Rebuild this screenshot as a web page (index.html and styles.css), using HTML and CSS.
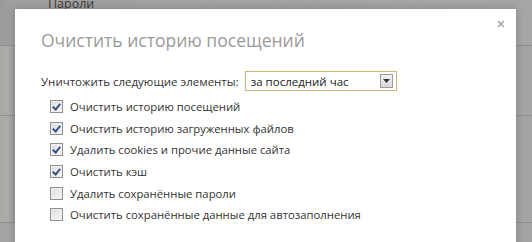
FILE: index.html
```html
<!DOCTYPE html>
<html lang="ru">
<head>
<meta charset="utf-8">
<link rel="stylesheet" href="styles.css">
</head>
<body>
<div class="page">
  <div class="page-row page-row-top"><span class="page-link">Пароли</span></div>
  <div class="page-row page-row-mid"></div>
  <div class="page-row page-row-low"></div>
</div>
<div class="dialog">
  <button class="close" aria-label="Закрыть">
    <svg width="8" height="8" viewBox="0 0 8 8"><path d="M1 1 L7 7 M7 1 L1 7" stroke="#a8a8a8" stroke-width="1.7" fill="none"/></svg>
  </button>
  <h1 class="title">Очистить историю посещений</h1>
  <div class="range">
    <span class="range-label">Уничтожить следующие элементы:</span>
    <div class="select">
      <span class="select-value">за последний час</span>
      <span class="select-btn"><svg width="7" height="4" viewBox="0 0 7 4"><path d="M0 0 H7 L3.5 4 Z" fill="#333"/></svg></span>
    </div>
  </div>
  <ul class="options">
    <li class="option"><span class="cb checked"></span>Очистить историю посещений</li>
    <li class="option"><span class="cb checked"></span>Очистить историю загруженных файлов</li>
    <li class="option"><span class="cb checked"></span>Удалить cookies и прочие данные сайта</li>
    <li class="option"><span class="cb checked"></span>Очистить кэш</li>
    <li class="option"><span class="cb"></span>Удалить сохранённые пароли</li>
    <li class="option"><span class="cb"></span>Очистить сохранённые данные для автозаполнения</li>
  </ul>
</div>
</body>
</html>
```
FILE: styles.css
```css
html, body {
  margin: 0;
  padding: 0;
  width: 532px;
  height: 242px;
  overflow: hidden;
}
body {
  background: #a4a4a4;
  font-family: "Open Sans", "Segoe UI", sans-serif;
  position: relative;
}
.page {
  display: flex;
  flex-direction: column;
}
.page-row {
  border-bottom: 1px solid #8e8e8e;
}
.page-row-top {
  height: 45px;
  background: linear-gradient(90deg, #9b9b9b 0, #a1a1a1 16px, #a6a6a6 100%);
}
.page-link {
  display: block;
  margin-left: 48px;
  margin-top: -3px;
  font-size: 12.5px;
  line-height: 14px;
  color: #3a3a3a;
}
.page-row-mid {
  height: 69px;
  background: linear-gradient(90deg, #a8a8a5 0, #acaca9 8px, #9c9c9c 15px, #a4a4a4 20px, #a4a4a4 100%);
}
.page-row-low {
  height: 106px;
  background: linear-gradient(90deg, #a8a8a5 0, #acaca9 8px, #9c9c9c 15px, #a4a4a4 20px, #a4a4a4 100%);
}
.dialog {
  position: absolute;
  left: 15px;
  top: 9px;
  width: 501px;
  height: 260px;
  background: #fff;
  box-shadow: 0 0 8px rgba(0,0,0,0.22);
  box-sizing: border-box;
  padding: 19px 0 0 26px;
}
.close {
  position: absolute;
  right: 11px;
  top: 11px;
  border: 0;
  background: none;
  padding: 0;
  width: 8px;
  height: 8px;
  display: flex;
}
.title {
  margin: 0;
  font-weight: normal;
  font-size: 17.5px;
  color: #9a9a9a;
  line-height: 24px;
}
.range {
  display: flex;
  align-items: center;
  margin-top: 19px;
  gap: 6px;
}
.range-label {
  font-size: 11.5px;
  color: #333;
}
.select {
  width: 152px;
  height: 20px;
  box-sizing: border-box;
  border: 1px solid #c9b886;
  box-shadow: 0 0 2px #f1e6c0;
  display: flex;
  align-items: center;
  justify-content: space-between;
  padding: 0 3px 0 5px;
}
.select-value {
  font-size: 11.5px;
  color: #222;
}
.select-btn {
  width: 13px;
  height: 14px;
  border: 1px solid #9a9a9a;
  background: linear-gradient(#f4f4f4, #d8d8d8);
  display: flex;
  align-items: center;
  justify-content: center;
  box-sizing: border-box;
}
.options {
  list-style: none;
  margin: 5px 0 0 9px;
  padding: 0;
}
.option {
  display: flex;
  align-items: center;
  height: 21.6px;
  font-size: 11.3px;
  color: #333;
}
.cb {
  width: 13px;
  height: 13px;
  box-sizing: border-box;
  border: 1px solid #8f8f8f;
  background: linear-gradient(135deg, #dcdcdc, #f8f8f8);
  margin-right: 7px;
  position: relative;
  flex: none;
  box-shadow: inset 0 0 0 1px #f0f0f0;
}
.cb.checked::after {
  content: "";
  position: absolute;
  left: 3px;
  top: 1px;
  width: 3px;
  height: 6px;
  border: solid #3d4f8a;
  border-width: 0 2px 2px 0;
  transform: rotate(40deg);
}
```
